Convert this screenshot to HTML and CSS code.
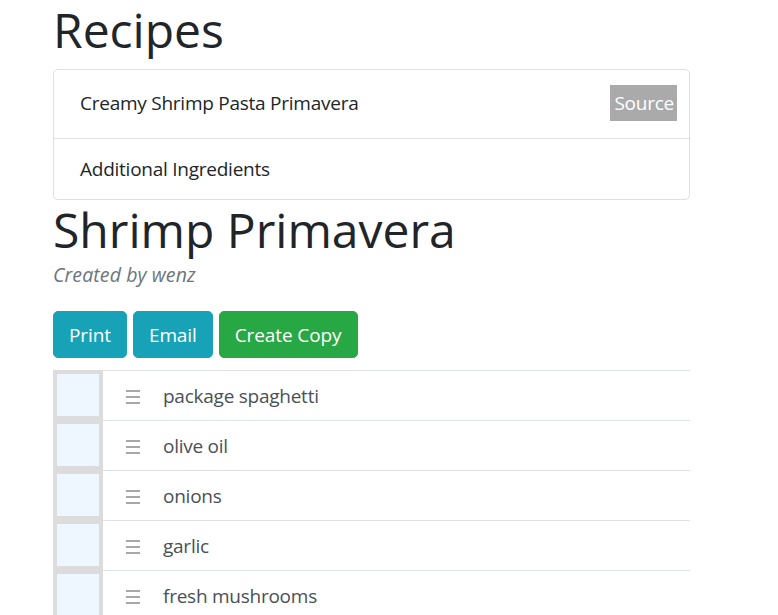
FILE: index.html
```html
<!DOCTYPE html>
<html>
<head>
<meta charset="utf-8">
<link rel="stylesheet" href="styles.css">
</head>
<body>
<div class="container">
  <h1 class="title">Recipes</h1>
  <div class="list-group">
    <div class="list-item first">
      <span>Creamy Shrimp Pasta Primavera</span>
      <span class="source">Source</span>
    </div>
    <div class="list-item">
      <span>Additional Ingredients</span>
    </div>
  </div>
  <h2 class="recipe-title">Shrimp Primavera</h2>
  <div class="author">Created by wenz</div>
  <div class="actions">
    <button class="btn btn-info">Print</button>
    <button class="btn btn-info">Email</button>
    <button class="btn btn-success">Create Copy</button>
  </div>
  <div class="ingredients">
    <div class="row"><div class="handle-cell"></div><div class="grip"><i></i><i></i><i></i></div><div class="name">package spaghetti</div></div>
    <div class="row"><div class="handle-cell"></div><div class="grip"><i></i><i></i><i></i></div><div class="name">olive oil</div></div>
    <div class="row"><div class="handle-cell"></div><div class="grip"><i></i><i></i><i></i></div><div class="name">onions</div></div>
    <div class="row"><div class="handle-cell"></div><div class="grip"><i></i><i></i><i></i></div><div class="name">garlic</div></div>
    <div class="row"><div class="handle-cell"></div><div class="grip"><i></i><i></i><i></i></div><div class="name">fresh mushrooms</div></div>
  </div>
</div>
</body>
</html>
```
FILE: styles.css
```css
html, body {
  margin: 0;
  padding: 0;
  background: #fff;
}
body {
  font-family: "Open Sans", "Noto Sans", sans-serif;
  font-size: 19px;
  letter-spacing: -0.25px;
  line-height: 30px;
  color: #212529;
}
.container {
  width: 637px;
  margin-left: 53px;
}
.title {
  margin: 0 0 9px 0;
  font-size: 48px;
  line-height: 60px;
  font-weight: 500;
  letter-spacing: 0;
}
.list-group {
  border: 1px solid #dfdfdf;
  border-radius: 5px;
}
.list-item {
  display: flex;
  align-items: center;
  justify-content: space-between;
  padding: 15px 25px 15px 26px;
}
.list-item.first {
  padding: 14px 12px 16px 26px;
  border-bottom: 1px solid #dfdfdf;
}
.source {
  background: #aaaaaa;
  color: #fff;
  height: 36px;
  line-height: 36px;
  padding: 0 3px 0 4px;
  margin: 1px 0;
}
.recipe-title {
  margin: 0;
  font-size: 48px;
  line-height: 60px;
  font-weight: 500;
  letter-spacing: 0;
}
.author {
  font-style: italic;
  font-size: 19.5px;
  letter-spacing: 0.1px;
  color: #6c757d;
}
.actions {
  display: flex;
  gap: 6px;
  margin-top: 21px;
}
.btn {
  font-family: inherit;
  font-size: 19px;
  letter-spacing: -0.1px;
  line-height: 30px;
  padding: 7.5px 15px;
  border: 1px solid transparent;
  border-radius: 5px;
  color: #fff;
  cursor: pointer;
}
.btn-info { background: #17a2b8; border-color: #17a2b8; }
.btn-success { background: #28a745; border-color: #28a745; }
.ingredients {
  margin-top: 12px;
}
.row {
  display: flex;
  align-items: center;
  height: 50px;
  border-top: 1px solid #dee2e6;
  box-sizing: border-box;
}
.handle-cell {
  width: 50px;
  height: 50px;
  margin-top: -1px;
  box-sizing: border-box;
  border: 4px solid #dcdcdc;
  background: #eef6ff;
}
.grip {
  width: 14px;
  margin-left: 23px;
  margin-right: 23px;
  display: flex;
  flex-direction: column;
  gap: 4px;
  padding-top: 3px;
}
.grip i {
  display: block;
  height: 2px;
  background: #a8a8a8;
}
.name {
  color: #495057;
}
```
